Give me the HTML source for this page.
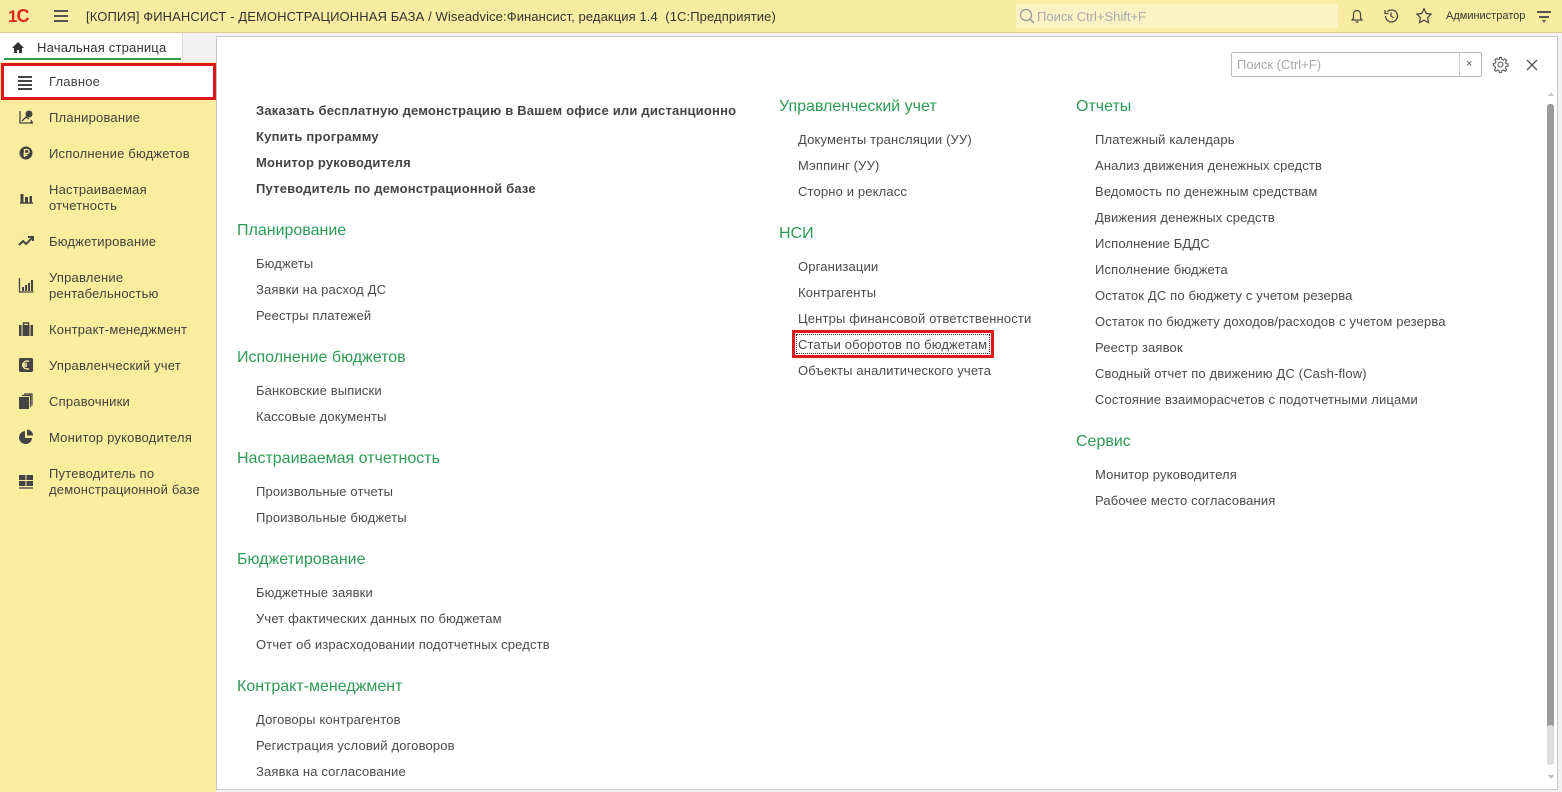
<!DOCTYPE html>
<html><head><meta charset="utf-8">
<style>
*{margin:0;padding:0;box-sizing:border-box}
body{width:1562px;height:792px;overflow:hidden;background:#f2f2f2;font-family:"Liberation Sans",Arial,sans-serif;color:#4a4a4a;position:relative}
.a{position:absolute;white-space:nowrap}
#top{position:absolute;left:0;top:0;width:1562px;height:33px;background:#f8eca0;border-bottom:1px solid #d9cf8a}
#side{position:absolute;left:0;top:62px;width:216px;height:730px;background:#fbed9e}
#tab{position:absolute;left:0;top:33px;width:183px;height:29px;background:#fff;border-right:1px solid #ddd}
#panel{position:absolute;left:216px;top:36px;width:1342px;height:754px;background:#fff;border:1px solid #c8c8c8}
.s{font-size:13px;color:#404040;letter-spacing:.2px;line-height:16px}
.l{font-size:13px;color:#4a4a4a;letter-spacing:.15px;line-height:16px;margin-top:1px}
.b{font-size:13px;font-weight:bold;color:#444;letter-spacing:.2px;line-height:16px;margin-top:1px}
.h{font-size:16px;color:#2d9a55;line-height:18px;margin-top:1px}
.ic{position:absolute;left:18px;width:16px;height:16px}
</style></head><body>
<div id="top">
  <div class="a" style="left:8px;top:6px;font:bold 17px 'Liberation Sans';color:#d9261c;letter-spacing:-1px">1<span style="font-size:18px">С</span></div>
  <div class="a" style="left:54px;top:10px;width:14px;height:2px;background:#555;box-shadow:0 5px 0 #555,0 10px 0 #555"></div>
  <div class="a" style="left:86px;top:9px;font-size:13px;color:#333;letter-spacing:.1px">[КОПИЯ] ФИНАНСИСТ - ДЕМОНСТРАЦИОННАЯ БАЗА / Wiseadvice:Финансист, редакция 1.4 &nbsp;(1С:Предприятие)</div>
  <div class="a" style="left:1016px;top:4px;width:322px;height:24px;background:#fbf3c4"></div>
  <svg class="a" style="left:1019px;top:8px" width="16" height="16"><circle cx="7" cy="7" r="5.5" fill="none" stroke="#999" stroke-width="1.3"/><path d="M11 11l4 4" stroke="#999" stroke-width="1.5"/></svg>
  <div class="a" style="left:1037px;top:9px;font-size:13px;color:#aaa">Поиск Ctrl+Shift+F</div>
  <svg class="a" style="left:1349px;top:8px" width="16" height="17"><path d="M3 12h10l-1.5-2V6a3.5 3.5 0 0 0-7 0v4z M6.5 14h3" fill="none" stroke="#444" stroke-width="1.2"/></svg>
  <svg class="a" style="left:1382px;top:7px" width="18" height="18"><path d="M3.5 9a6 6 0 1 0 1.8-4.3M3 3v3.5h3.5M9 5.5V9l2.5 2" fill="none" stroke="#444" stroke-width="1.3"/></svg>
  <svg class="a" style="left:1415px;top:7px" width="18" height="18"><path d="M9 1.8l2.2 4.6 5 .7-3.6 3.5.9 5L9 13.2l-4.5 2.4.9-5L1.8 7.1l5-.7z" fill="none" stroke="#444" stroke-width="1.2"/></svg>
  <div class="a" style="left:1446px;top:10px;font-size:11px;color:#333">Администратор</div>
  <div class="a" style="left:1537px;top:11px;width:14px;height:1.5px;background:#555"></div>
  <div class="a" style="left:1539px;top:16px;width:10px;height:1.5px;background:#555"></div>
  <div class="a" style="left:1541.5px;top:20px;width:0;height:0;border-left:2.5px solid transparent;border-right:2.5px solid transparent;border-top:3px solid #555"></div>
</div>
<div id="tab">
  <svg class="a" style="left:11px;top:8px" width="14" height="13"><path d="M7 1L1 7h2v5h3V9h2v3h3V7h2z" fill="#333"/></svg>
  <div class="a s" style="left:37px;top:7px;color:#333">Начальная страница</div>
  <div class="a" style="left:4px;top:25px;width:177px;height:2px;background:#2d9a55"></div>
</div>
<div id="side">
  <div class="a" style="left:1px;top:1px;width:215px;height:37px;background:#fff;border:3px solid #e0161c"></div>
  <div class="a" style="left:18px;top:14px;width:14px;height:2px;background:#444;box-shadow:0 4px 0 #444,0 8px 0 #444,0 12px 0 #444"></div>
  <div class="a s" style="left:49px;top:12px">Главное</div>

  <svg class="ic" style="top:47px" viewBox="0 0 16 16"><path d="M2 2v12h13M4 12l4-4 3 2M12 14l2-1-1-2" fill="none" stroke="#444" stroke-width="1.3"/><circle cx="11" cy="5" r="3.5" fill="#444"/></svg>
  <div class="a s" style="left:49px;top:48px">Планирование</div>
  <svg class="ic" style="top:83px" viewBox="0 0 16 16"><circle cx="8" cy="8" r="6.5" fill="#444"/><path d="M6.5 12V4.5h2.5a2 2 0 0 1 0 4H5.5M5.5 10.2h4" fill="none" stroke="#fbed9e" stroke-width="1.3"/></svg>
  <div class="a s" style="left:49px;top:84px">Исполнение бюджетов</div>
  <svg class="ic" style="top:127px" viewBox="0 0 16 16"><path d="M2 14h13" stroke="#444" stroke-width="1.5"/><rect x="2.5" y="5" width="3" height="9" fill="#444"/><rect x="7" y="8" width="3" height="6" fill="#444"/><rect x="11.5" y="7" width="2.5" height="7" fill="#444"/></svg>
  <div class="a s" style="left:49px;top:120px">Настраиваемая</div>
  <div class="a s" style="left:49px;top:136px">отчетность</div>
  <svg class="ic" style="top:171px" viewBox="0 0 16 16"><path d="M1 12l4-4 3 3 6-6M10 4h5v4" fill="none" stroke="#444" stroke-width="2"/></svg>
  <div class="a s" style="left:49px;top:172px">Бюджетирование</div>
  <svg class="ic" style="top:215px" viewBox="0 0 16 16"><path d="M1.5 1v14h14" stroke="#444" stroke-width="1.3" fill="none"/><rect x="4" y="10" width="2" height="4" fill="#444"/><rect x="7" y="8" width="2" height="6" fill="#444"/><rect x="10" y="6" width="2" height="8" fill="#444"/><rect x="13" y="3" width="2" height="11" fill="#444"/></svg>
  <div class="a s" style="left:49px;top:208px">Управление</div>
  <div class="a s" style="left:49px;top:224px">рентабельностью</div>
  <svg class="ic" style="top:259px" viewBox="0 0 16 16"><rect x="1" y="4" width="14" height="11" fill="#444"/><path d="M5.5 4V2h5v2" fill="none" stroke="#444" stroke-width="1.5"/><path d="M4 4v11M12 4v11" stroke="#fbed9e" stroke-width="1"/></svg>
  <div class="a s" style="left:49px;top:260px">Контракт-менеджмент</div>
  <svg class="ic" style="top:295px" viewBox="0 0 16 16"><rect x="1" y="1" width="14" height="14" rx="1.5" fill="#444"/><path d="M11 4.5a4 4 0 1 0 0 7M4 7h5M4 9h5" fill="none" stroke="#fbed9e" stroke-width="1.4"/></svg>
  <div class="a s" style="left:49px;top:296px">Управленческий учет</div>
  <svg class="ic" style="top:331px" viewBox="0 0 16 16"><rect x="1" y="4" width="10" height="12" fill="#444"/><path d="M4 2.5h8.5V14M6 1h8v11.5" fill="none" stroke="#444" stroke-width="1.2"/></svg>
  <div class="a s" style="left:49px;top:332px">Справочники</div>
  <svg class="ic" style="top:367px" viewBox="0 0 16 16"><path d="M7 2a6.5 6.5 0 1 0 7 7H7z" fill="#444"/><path d="M9 0.5a6 6 0 0 1 6 6H9z" fill="#444"/></svg>
  <div class="a s" style="left:49px;top:368px">Монитор руководителя</div>
  <svg class="ic" style="top:411px" viewBox="0 0 16 16"><rect x="1" y="2" width="6.5" height="5" fill="#444"/><rect x="8.5" y="2" width="6.5" height="5" fill="#444"/><rect x="1" y="8" width="6.5" height="5" fill="#444"/><rect x="8.5" y="8" width="6.5" height="5" fill="#444"/><path d="M1 15h14" stroke="#444" stroke-width="1.3"/></svg>
  <div class="a s" style="left:49px;top:404px">Путеводитель по</div>
  <div class="a s" style="left:49px;top:420px">демонстрационной базе</div>
</div>
<div id="panel"></div>
<div class="a" style="left:1231px;top:52px;width:251px;height:25px;border:1px solid #b8b8b8;border-radius:2px;background:#fff"></div>
<div class="a" style="left:1459px;top:53px;width:1px;height:23px;background:#ccc"></div>
<div class="a" style="left:1237px;top:57px;font-size:13px;color:#a8a8a8">Поиск (Ctrl+F)</div>
<div class="a" style="left:1466px;top:58px;font-size:11px;color:#555">×</div>
<svg class="a" style="left:1492px;top:56px" width="17" height="17" viewBox="0 0 24 24"><path d="M12 8.5a3.5 3.5 0 1 0 0 7 3.5 3.5 0 0 0 0-7zM10.5 2h3l.5 2.8 2 1 2.5-1.6 2.1 2.1-1.6 2.5.9 2 2.8.5v3l-2.8.5-.9 2 1.6 2.5-2.1 2.1-2.5-1.6-2 .9-.5 2.8h-3l-.5-2.8-2-.9-2.5 1.6-2.1-2.1 1.6-2.5-.9-2L2 13.5v-3l2.8-.5.9-2-1.6-2.5 2.1-2.1 2.5 1.6 2-1z" fill="none" stroke="#555" stroke-width="1.5"/></svg>
<svg class="a" style="left:1526px;top:59px" width="12" height="12"><path d="M1 1l10 10M11 1L1 11" stroke="#555" stroke-width="1.3"/></svg>
<div class="a" style="left:1547px;top:104px;width:7px;height:624px;background:#9a9a9a;border-radius:3px"></div>
<div class="a" style="left:1547px;top:725px;width:7px;height:40px;background:#ddd;border-radius:3px"></div>
<div class="a" style="left:1548px;top:92px;border-left:3px solid transparent;border-right:3px solid transparent;border-bottom:4px solid #ccc"></div>
<div class="a" style="left:1548px;top:775px;border-left:3px solid transparent;border-right:3px solid transparent;border-top:4px solid #bbb"></div>

<div class="a b" style="left:256px;top:102px">Заказать бесплатную демонстрацию в Вашем офисе или дистанционно</div>
<div class="a b" style="left:256px;top:128px">Купить программу</div>
<div class="a b" style="left:256px;top:154px">Монитор руководителя</div>
<div class="a b" style="left:256px;top:180px">Путеводитель по демонстрационной базе</div>

<div class="a h" style="left:237px;top:221px">Планирование</div>
<div class="a l" style="left:256px;top:255px">Бюджеты</div>
<div class="a l" style="left:256px;top:281px">Заявки на расход ДС</div>
<div class="a l" style="left:256px;top:307px">Реестры платежей</div>
<div class="a h" style="left:237px;top:348px">Исполнение бюджетов</div>
<div class="a l" style="left:256px;top:382px">Банковские выписки</div>
<div class="a l" style="left:256px;top:408px">Кассовые документы</div>
<div class="a h" style="left:237px;top:449px">Настраиваемая отчетность</div>
<div class="a l" style="left:256px;top:483px">Произвольные отчеты</div>
<div class="a l" style="left:256px;top:509px">Произвольные бюджеты</div>
<div class="a h" style="left:237px;top:550px">Бюджетирование</div>
<div class="a l" style="left:256px;top:584px">Бюджетные заявки</div>
<div class="a l" style="left:256px;top:610px">Учет фактических данных по бюджетам</div>
<div class="a l" style="left:256px;top:636px">Отчет об израсходовании подотчетных средств</div>
<div class="a h" style="left:237px;top:677px">Контракт-менеджмент</div>
<div class="a l" style="left:256px;top:711px">Договоры контрагентов</div>
<div class="a l" style="left:256px;top:737px">Регистрация условий договоров</div>
<div class="a l" style="left:256px;top:763px">Заявка на согласование</div>

<div class="a h" style="left:779px;top:97px">Управленческий учет</div>
<div class="a l" style="left:798px;top:131px">Документы трансляции (УУ)</div>
<div class="a l" style="left:798px;top:157px">Мэппинг (УУ)</div>
<div class="a l" style="left:798px;top:183px">Сторно и рекласс</div>
<div class="a h" style="left:779px;top:224px">НСИ</div>
<div class="a l" style="left:798px;top:258px">Организации</div>
<div class="a l" style="left:798px;top:284px">Контрагенты</div>
<div class="a l" style="left:798px;top:310px">Центры финансовой ответственности</div>
<div class="a" style="left:792px;top:330px;width:202px;height:28px;border:3px solid #e0161c"></div>
<div class="a" style="left:796px;top:334px;width:194px;height:20px;border:1px dotted #333"></div>
<div class="a l" style="left:798px;top:336px">Статьи оборотов по бюджетам</div>
<div class="a l" style="left:798px;top:362px">Объекты аналитического учета</div>

<div class="a h" style="left:1076px;top:97px">Отчеты</div>
<div class="a l" style="left:1095px;top:131px">Платежный календарь</div>
<div class="a l" style="left:1095px;top:157px">Анализ движения денежных средств</div>
<div class="a l" style="left:1095px;top:183px">Ведомость по денежным средствам</div>
<div class="a l" style="left:1095px;top:209px">Движения денежных средств</div>
<div class="a l" style="left:1095px;top:235px">Исполнение БДДС</div>
<div class="a l" style="left:1095px;top:261px">Исполнение бюджета</div>
<div class="a l" style="left:1095px;top:287px">Остаток ДС по бюджету с учетом резерва</div>
<div class="a l" style="left:1095px;top:313px">Остаток по бюджету доходов/расходов с учетом резерва</div>
<div class="a l" style="left:1095px;top:339px">Реестр заявок</div>
<div class="a l" style="left:1095px;top:365px">Сводный отчет по движению ДС (Cash-flow)</div>
<div class="a l" style="left:1095px;top:391px">Состояние взаиморасчетов с подотчетными лицами</div>
<div class="a h" style="left:1076px;top:432px">Сервис</div>
<div class="a l" style="left:1095px;top:466px">Монитор руководителя</div>
<div class="a l" style="left:1095px;top:492px">Рабочее место согласования</div>
</body></html>
